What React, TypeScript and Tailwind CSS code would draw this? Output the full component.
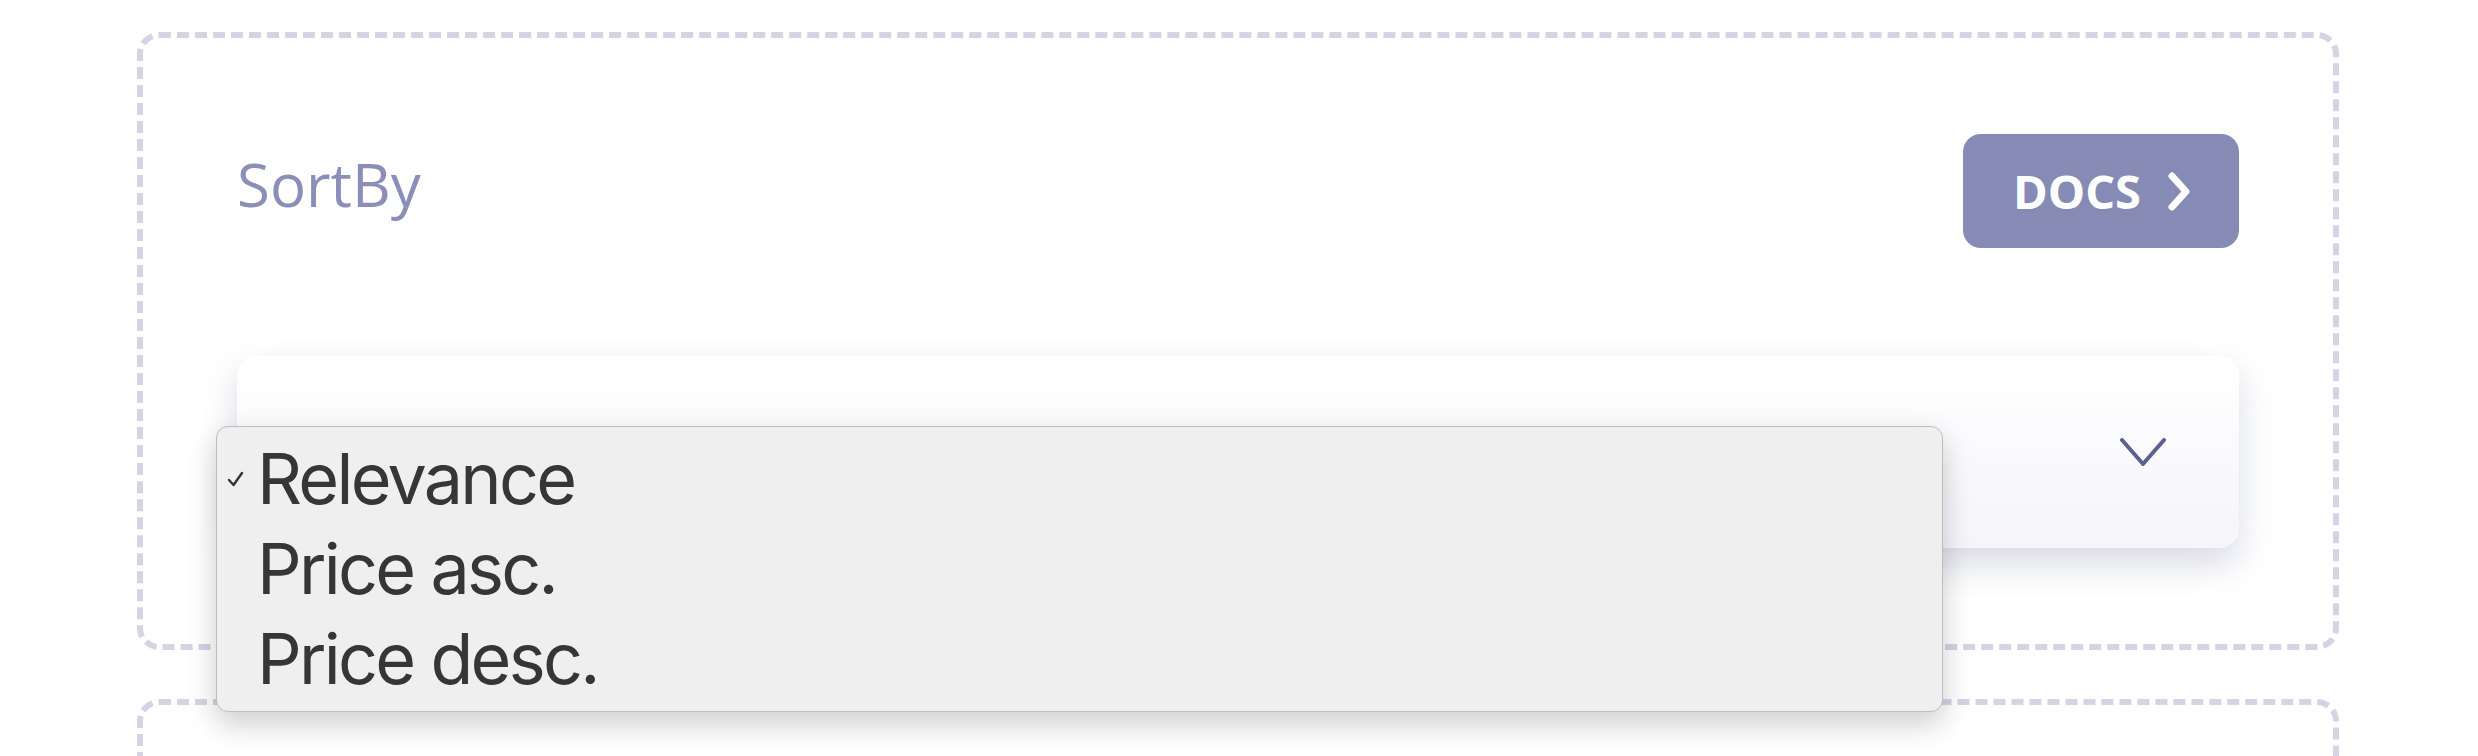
import React from 'react';

const options = ['Relevance', 'Price asc.', 'Price desc.'];

const SortByCard: React.FC = () => {
  return (
    <section className="rounded-[22px] border-[6px] border-dashed border-[#d3d4e4] px-[94px] py-[96px]">
      <div className="flex h-[114px] items-center justify-between">
        <h2 className="pb-[14px] text-[60px] font-normal leading-none text-[#8a8fb9]">SortBy</h2>
        <button className="flex h-[114px] items-center gap-[26px] rounded-[18px] bg-[#858bb4] pl-[50px] pr-[48px] text-[47px] font-bold leading-none text-white">
          DOCS
          <svg width="24" height="41" viewBox="0 0 24 41" fill="none">
            <path d="M5 5 L19 20.5 L5 36" stroke="currentColor" strokeWidth="7" strokeLinecap="round" strokeLinejoin="round" />
          </svg>
        </button>
      </div>

      <div className="relative mt-[108px]">
        <div className="flex h-[192px] items-center justify-between rounded-[20px] bg-linear-to-b from-white to-[#f5f5fa] pl-[70px] pr-[73px] shadow-[0_16px_34px_rgba(80,85,140,0.22)]">
          <span className="text-[61px] leading-none text-[#222]">Relevance</span>
          <svg width="46" height="28" viewBox="0 0 46 28" fill="none">
            <path d="M2 2 L23 26 L44 2" stroke="#5c6192" strokeWidth="4" strokeLinecap="round" strokeLinejoin="round" />
          </svg>
        </div>

        {/* native-looking option list */}
        <div className="absolute left-[-21px] top-[70px] z-10 h-[286px] w-[1727px] rounded-[12px] border border-[#bdbdbd] bg-[#efefef] py-[7px] shadow-[0_12px_30px_rgba(0,0,0,0.2)]">
          {options.map((opt, i) => (
            <div key={opt} className="flex h-[90px] items-center">
              <div className="flex w-[40px] justify-start pl-[10px]">
                {i === 0 && (
                  <svg width="17" height="16" viewBox="0 0 17 16" fill="none">
                    <path d="M2 9 L6.5 14 L15 2" stroke="#333" strokeWidth="2.4" strokeLinecap="round" strokeLinejoin="round" />
                  </svg>
                )}
              </div>
              <span className="font-['Inter',sans-serif] text-[70px] leading-none tracking-[-2.7px] text-[#363636]">{opt}</span>
            </div>
          ))}
        </div>
      </div>
    </section>
  );
};

export default function App() {
  return (
    <div className="h-screen overflow-hidden bg-white pl-[137px] pr-[139px] pt-[32px] font-['Open_Sans',sans-serif]">
      <SortByCard />
      <section className="mt-[49px] h-[300px] rounded-[22px] border-[6px] border-dashed border-[#d3d4e4]" />
    </div>
  );
}
